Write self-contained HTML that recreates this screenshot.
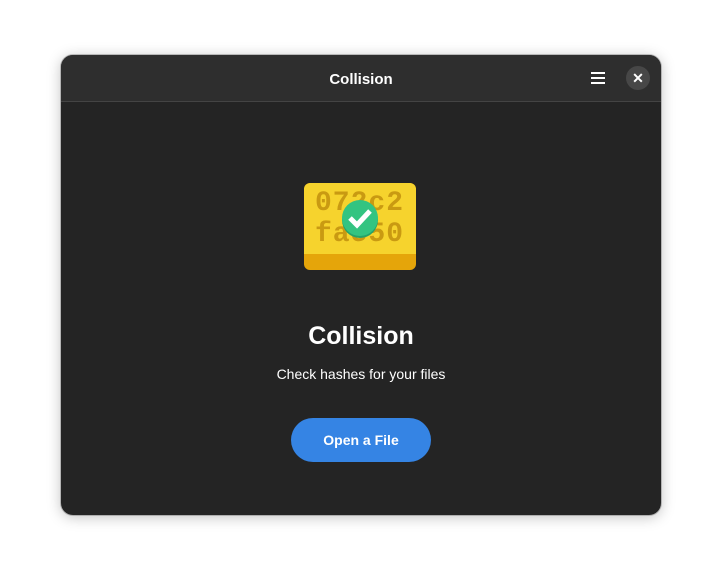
<!DOCTYPE html>
<html><head><style>
html,body{margin:0;padding:0;width:722px;height:582px;background:#fff;overflow:hidden;font-family:"Liberation Sans",sans-serif}
.win{position:absolute;left:61px;top:55px;width:600px;height:460px;border-radius:12px;background:#242424;overflow:hidden;box-shadow:0 2px 14px rgba(0,0,0,.25),0 0 0 1px rgba(0,0,0,.2)}
.hb{position:absolute;left:0;top:0;width:600px;height:46px;background:#2e2e2e;border-bottom:1px solid #444}
.title{position:absolute;left:0;right:0;top:16px;text-align:center;color:#fff;font-weight:bold;font-size:15px}
.menu{position:absolute;left:530px;top:17px;width:14px}
.menu div{height:2px;background:#fff;margin-bottom:3px}
.close{position:absolute;left:565px;top:11px;width:24px;height:24px;border-radius:12px;background:#474747;color:#fff;text-align:center;line-height:24px;font-size:14px;font-weight:bold}
.icon{position:absolute;left:243px;top:128px;width:112px;height:87px;border-radius:6px;background:#e5a50a;overflow:hidden}
.icon .top{position:absolute;left:0;top:0;width:112px;height:71px;background:#f6d32d;border-radius:6px 6px 0 0}
.hash{position:absolute;left:11px;font-family:"Liberation Mono",monospace;font-weight:bold;font-size:28px;color:#c99a12;letter-spacing:1px}
h1{position:absolute;left:0;right:0;top:267px;margin:0;text-align:center;color:#fff;font-size:25px;font-weight:bold}
.sub{position:absolute;left:0;right:0;top:311px;text-align:center;color:#fff;font-size:14px}
.btn{position:absolute;left:230px;top:363px;width:140px;height:44px;border-radius:22px;background:#3584e4;color:#fff;font-weight:bold;font-size:14px;text-align:center;line-height:44px}
</style></head><body>
<div class="win">
<div class="hb"><div class="title">Collision</div>
<div class="menu"><div></div><div></div><div></div></div>
<div class="close">✕</div></div>
<div class="icon"><div class="top"></div>
<div class="hash" style="top:5px">072c2</div>
<div class="hash" style="top:36px">fa550</div>
<svg style="position:absolute;left:37px;top:16px" width="38" height="40" viewBox="0 0 38 40">
<circle cx="19" cy="21" r="18" fill="#26a269"/><circle cx="19" cy="19" r="18" fill="#33c481"/>
<path d="M9 19 L16 26 L29 12" stroke="#fff" stroke-width="5" fill="none"/></svg>
</div>
<h1>Collision</h1>
<div class="sub">Check hashes for your files</div>
<div class="btn">Open a File</div>
</div>
</body></html>
